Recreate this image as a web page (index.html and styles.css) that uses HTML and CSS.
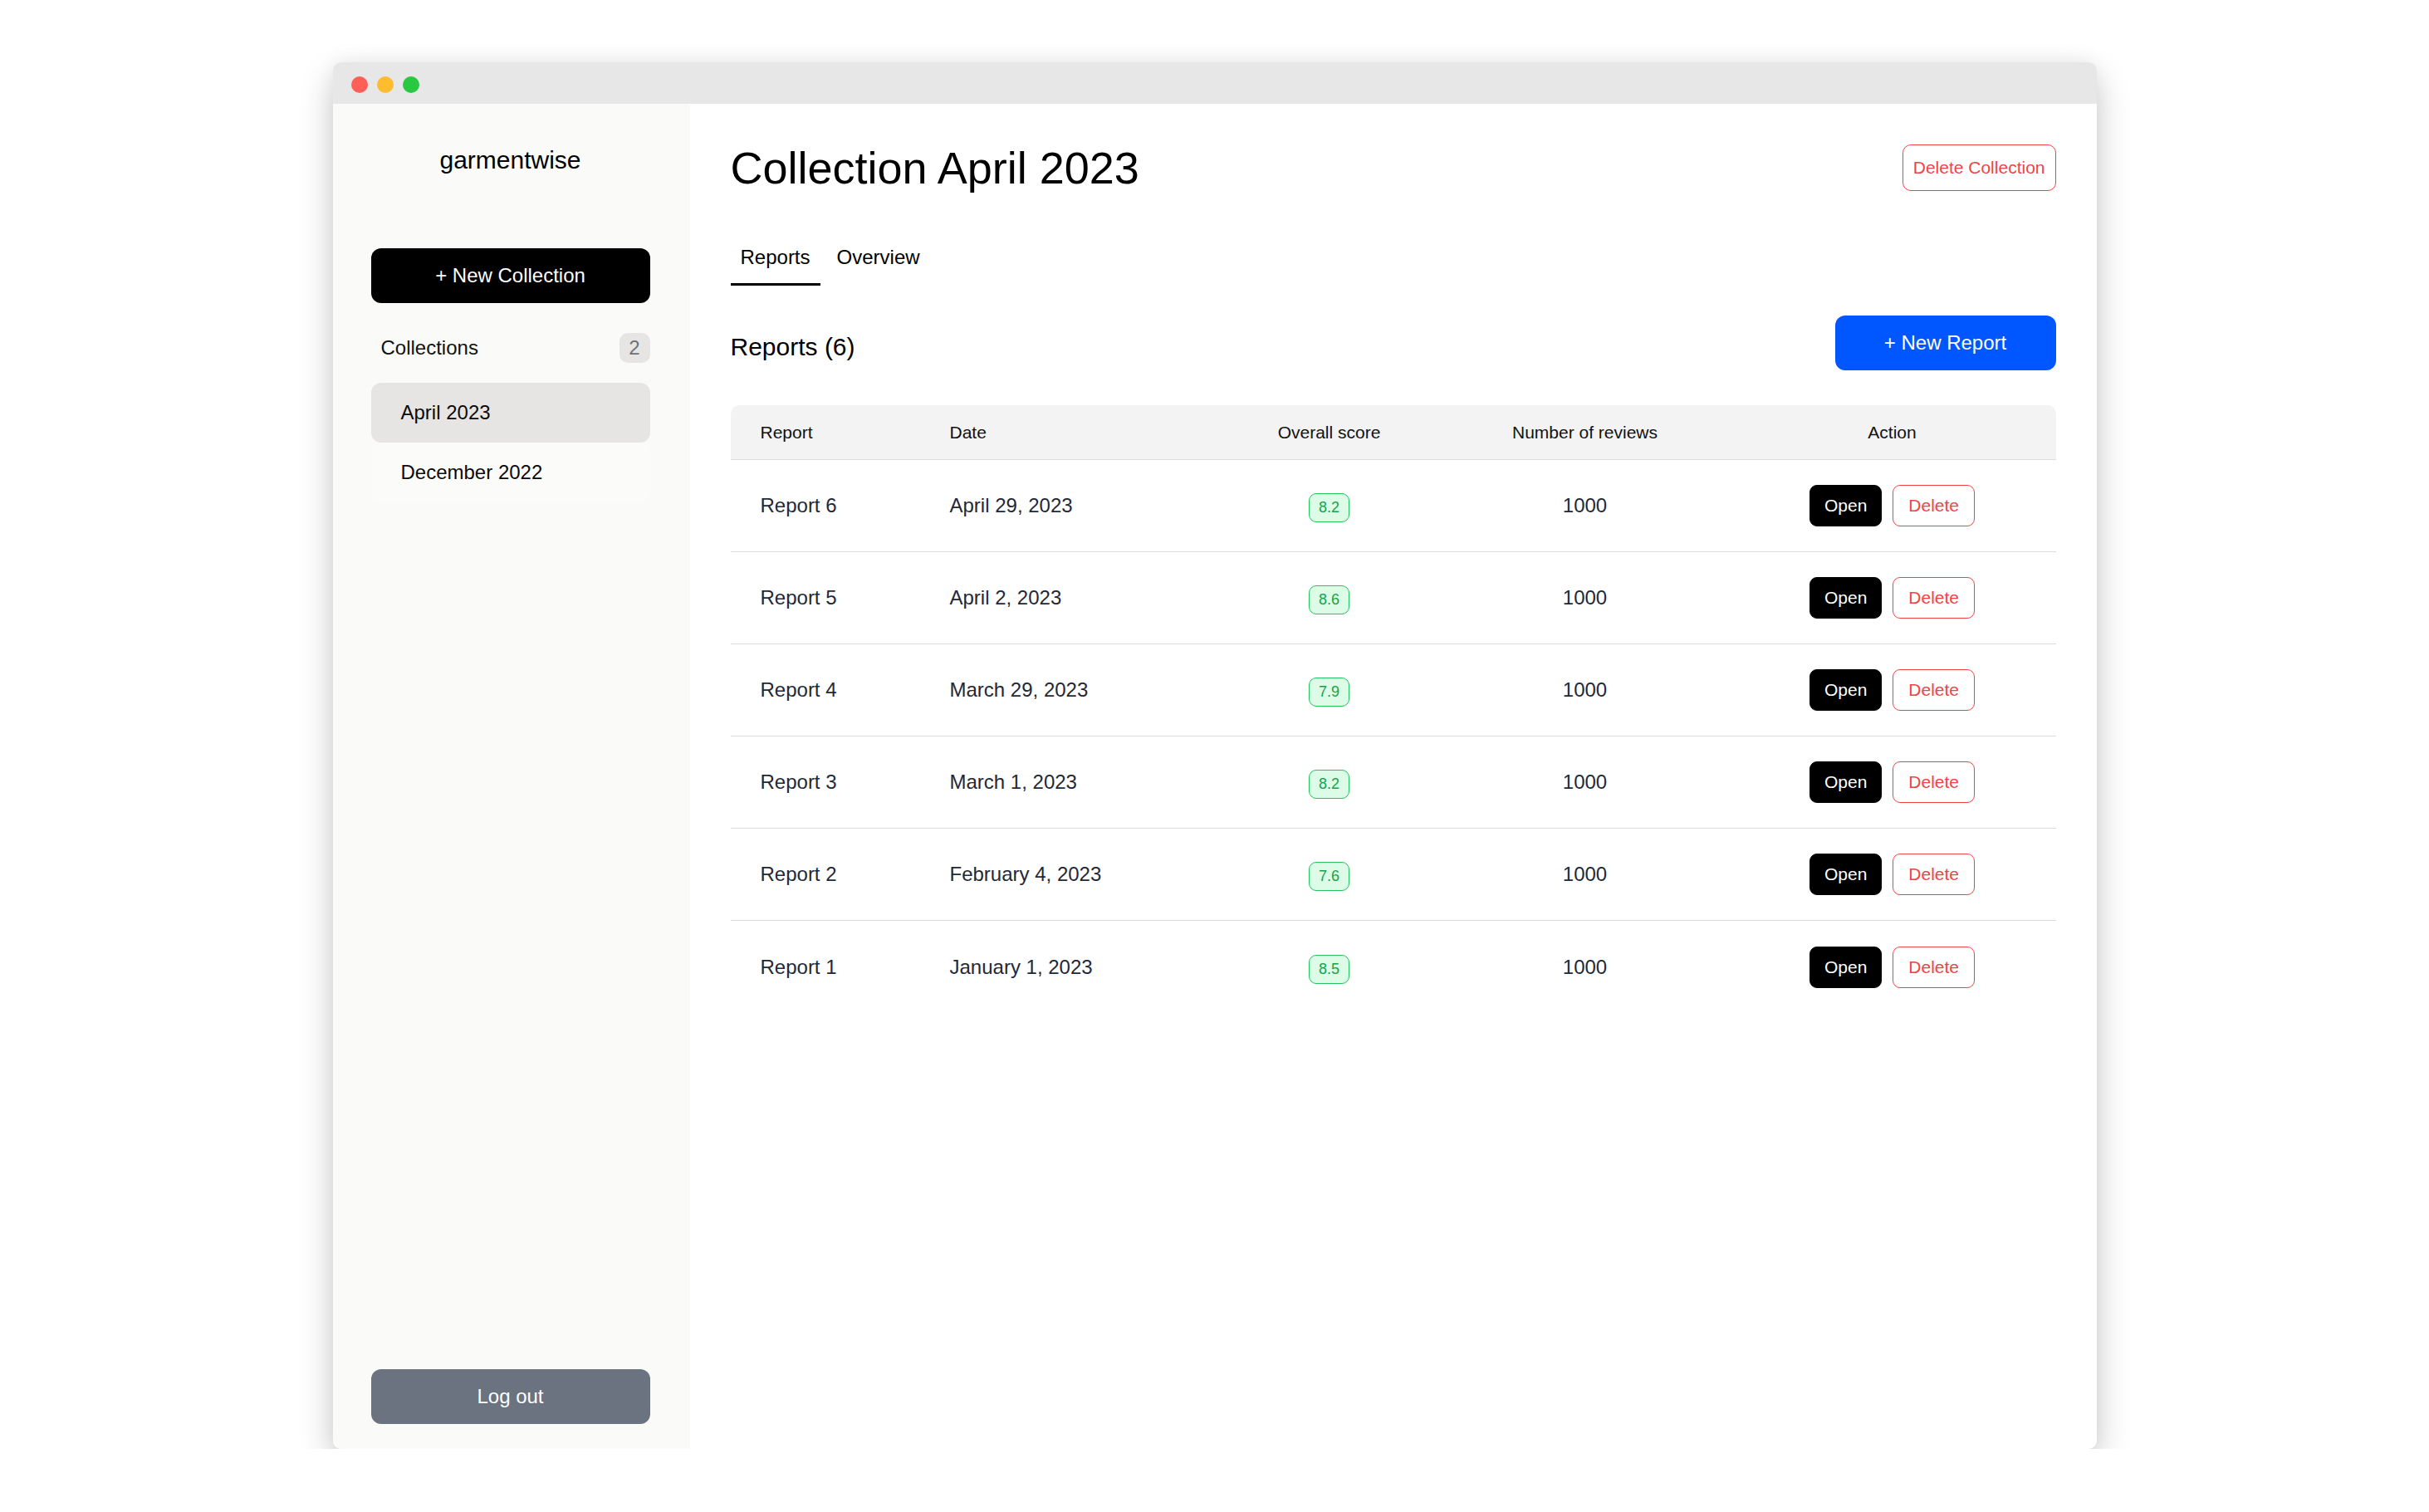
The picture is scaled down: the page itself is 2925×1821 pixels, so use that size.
FILE: index.html
```html
<!DOCTYPE html>
<html lang="en">
<head>
<meta charset="utf-8">
<title>garmentwise</title>
<link rel="stylesheet" href="styles.css">
</head>
<body>
<div class="window">
  <div class="titlebar">
    <span class="dot dot-red"></span>
    <span class="dot dot-yellow"></span>
    <span class="dot dot-green"></span>
  </div>
  <div class="app">
    <aside class="sidebar">
      <div class="logo">garmentwise</div>
      <button class="btn-new-collection">+ New Collection</button>
      <div class="collections-head">
        <span>Collections</span>
        <span class="count">2</span>
      </div>
      <nav class="collection-list">
        <a class="collection-item active">April 2023</a>
        <a class="collection-item hover">December 2022</a>
      </nav>
      <div class="spacer"></div>
      <button class="btn-logout">Log out</button>
    </aside>
    <main class="main">
      <div class="page-head">
        <h1 class="page-title">Collection April 2023</h1>
        <button class="btn-outline-red btn-delete-collection">Delete Collection</button>
      </div>
      <div class="tabs">
        <span class="tab active">Reports</span>
        <span class="tab">Overview</span>
      </div>
      <div class="section-head">
        <h2 class="section-title">Reports (6)</h2>
        <button class="btn-new-report">+ New Report</button>
      </div>
      <table class="reports">
        <colgroup>
          <col class="c1"><col class="c2"><col class="c3"><col class="c4"><col class="c5">
        </colgroup>
        <thead>
          <tr>
            <th class="left">Report</th>
            <th class="left">Date</th>
            <th>Overall score</th>
            <th>Number of reviews</th>
            <th>Action</th>
          </tr>
        </thead>
        <tbody>
          <tr>
            <td class="left">Report 6</td><td class="left">April 29, 2023</td>
            <td><span class="score">8.2</span></td><td>1000</td>
            <td><div class="actions"><button class="btn-open">Open</button><button class="btn-outline-red btn-del">Delete</button></div></td>
          </tr>
          <tr>
            <td class="left">Report 5</td><td class="left">April 2, 2023</td>
            <td><span class="score">8.6</span></td><td>1000</td>
            <td><div class="actions"><button class="btn-open">Open</button><button class="btn-outline-red btn-del">Delete</button></div></td>
          </tr>
          <tr>
            <td class="left">Report 4</td><td class="left">March 29, 2023</td>
            <td><span class="score">7.9</span></td><td>1000</td>
            <td><div class="actions"><button class="btn-open">Open</button><button class="btn-outline-red btn-del">Delete</button></div></td>
          </tr>
          <tr>
            <td class="left">Report 3</td><td class="left">March 1, 2023</td>
            <td><span class="score">8.2</span></td><td>1000</td>
            <td><div class="actions"><button class="btn-open">Open</button><button class="btn-outline-red btn-del">Delete</button></div></td>
          </tr>
          <tr>
            <td class="left">Report 2</td><td class="left">February 4, 2023</td>
            <td><span class="score">7.6</span></td><td>1000</td>
            <td><div class="actions"><button class="btn-open">Open</button><button class="btn-outline-red btn-del">Delete</button></div></td>
          </tr>
          <tr class="last">
            <td class="left">Report 1</td><td class="left">January 1, 2023</td>
            <td><span class="score">8.5</span></td><td>1000</td>
            <td><div class="actions"><button class="btn-open">Open</button><button class="btn-outline-red btn-del">Delete</button></div></td>
          </tr>
        </tbody>
      </table>
    </main>
  </div>
</div>
</body>
</html>
```
FILE: styles.css
```css
* { box-sizing: border-box; }
html, body { margin: 0; padding: 0; background: #ffffff; }
body {
  font-family: "Liberation Sans", Arial, Helvetica, sans-serif;
  color: #000;
  padding-top: 75px;
}
button { font-family: inherit; cursor: pointer; }

.window {
  width: 2124px;
  height: 1670px;
  margin: 0 auto;
  border-radius: 10px;
  overflow: hidden;
  background: #fff;
  box-shadow: 0 18px 44px rgba(0,0,0,0.2), 0 0 24px rgba(0,0,0,0.06);
  display: flex;
  flex-direction: column;
}
.titlebar {
  height: 50px;
  background: #e7e7e7;
  display: flex;
  align-items: center;
  gap: 11px;
  padding: 3px 0 0 22px;
  flex: none;
}
.dot { width: 20px; height: 20px; border-radius: 50%; display: block; }
.dot-red { background: #ff5f57; }
.dot-yellow { background: #febc2e; }
.dot-green { background: #28c840; }

.app { flex: 1; display: flex; min-height: 0; }

.sidebar {
  width: 430px;
  flex: none;
  background: #fafaf9;
  display: flex;
  flex-direction: column;
  padding: 48px 48px 30px 46px;
}
.logo {
  font-size: 30px;
  line-height: 40px;
  text-align: center;
  color: #000;
}
.btn-new-collection {
  margin-top: 86px;
  height: 66px;
  border: none;
  border-radius: 12px;
  background: #000;
  color: #fff;
  font-size: 24px;
}
.collections-head {
  margin-top: 36px;
  height: 36px;
  display: flex;
  align-items: center;
  justify-content: space-between;
  padding-left: 12px;
  font-size: 24px;
  color: #111;
}
.count {
  width: 37px;
  height: 36px;
  border-radius: 10px;
  background: #e7e5e4;
  color: #6b7280;
  display: flex;
  align-items: center;
  justify-content: center;
  font-size: 24px;
}
.collection-list { margin-top: 24px; display: flex; flex-direction: column; }
.collection-item {
  height: 72px;
  display: flex;
  align-items: center;
  padding-left: 36px;
  border-radius: 12px;
  font-size: 24px;
  color: #0c0a09;
}
.collection-item.active { background: #e7e5e4; }
.collection-item.hover { background: #fbfbfa; }
.spacer { flex: 1; }
.btn-logout {
  height: 66px;
  border: none;
  border-radius: 12px;
  background: #6b7280;
  color: #fff;
  font-size: 24px;
}

.main {
  flex: 1;
  padding: 45px 49px 0 49px;
  display: flex;
  flex-direction: column;
}
.page-head {
  display: flex;
  align-items: center;
  justify-content: space-between;
  height: 64px;
}
.page-title {
  margin: 0;
  font-size: 54px;
  line-height: 64px;
  font-weight: 400;
  color: #000;
}
.btn-outline-red {
  background: #fff;
  border: 1.5px solid #ef4444;
  color: #ef4444;
  font-size: 21px;
}
.btn-delete-collection {
  height: 56px;
  padding: 0 12px;
  border-radius: 10px;
}

.tabs {
  margin-top: 62px;
  display: flex;
  gap: 8px;
}
.tab {
  padding: 0 12px 17px 12px;
  font-size: 24px;
  line-height: 28px;
  border-bottom: 3px solid transparent;
  color: #000;
}
.tab.active { border-bottom-color: #000; }

.section-head {
  margin-top: 36px;
  display: flex;
  align-items: center;
  justify-content: space-between;
}
.section-title {
  margin: 10px 0 0 0;
  font-size: 30px;
  font-weight: 400;
  color: #000;
}
.btn-new-report {
  height: 66px;
  width: 266px;
  border: none;
  border-radius: 12px;
  background: #0057ff;
  color: #fff;
  font-size: 24px;
}

.reports {
  margin-top: 42px;
  width: 1596px;
  border-collapse: separate;
  border-spacing: 0;
  table-layout: fixed;
}
.c1 { width: 228px; }
.c2 { width: 358px; }
.c3 { width: 270px; }
.c4 { width: 346px; }
.c5 { width: 394px; }
.reports th {
  height: 66px;
  background: #f3f3f3;
  font-weight: 400;
  font-size: 21px;
  color: #111;
  text-align: center;
  border-bottom: 1.5px solid #dcdce0;
  padding: 0;
}
.reports th:first-child { border-top-left-radius: 10px; }
.reports th:last-child { border-top-right-radius: 10px; }
.reports th.left, .reports td.left { text-align: left; padding-left: 36px; }
.reports td {
  height: 111px;
  font-size: 24px;
  color: #1f2937;
  text-align: center;
  border-bottom: 1.5px solid #dcdce0;
  padding: 0;
}
.reports tr.last td { border-bottom: none; }
.score {
  display: inline-block;
  height: 35px;
  line-height: 32px;
  padding: 0 11px;
  margin-top: 5px;
  border: 1.5px solid #22c55e;
  border-radius: 9px;
  background: #dcfce7;
  color: #16a34a;
  font-size: 18px;
  vertical-align: middle;
}
.actions {
  display: flex;
  justify-content: center;
  gap: 13px;
}
.btn-open {
  height: 50px;
  padding: 0 17px;
  border: 1.5px solid #000;
  border-radius: 9px;
  background: #000;
  color: #fff;
  font-size: 21px;
}
.btn-del {
  height: 50px;
  padding: 0 18px;
  border-radius: 9px;
}
```
